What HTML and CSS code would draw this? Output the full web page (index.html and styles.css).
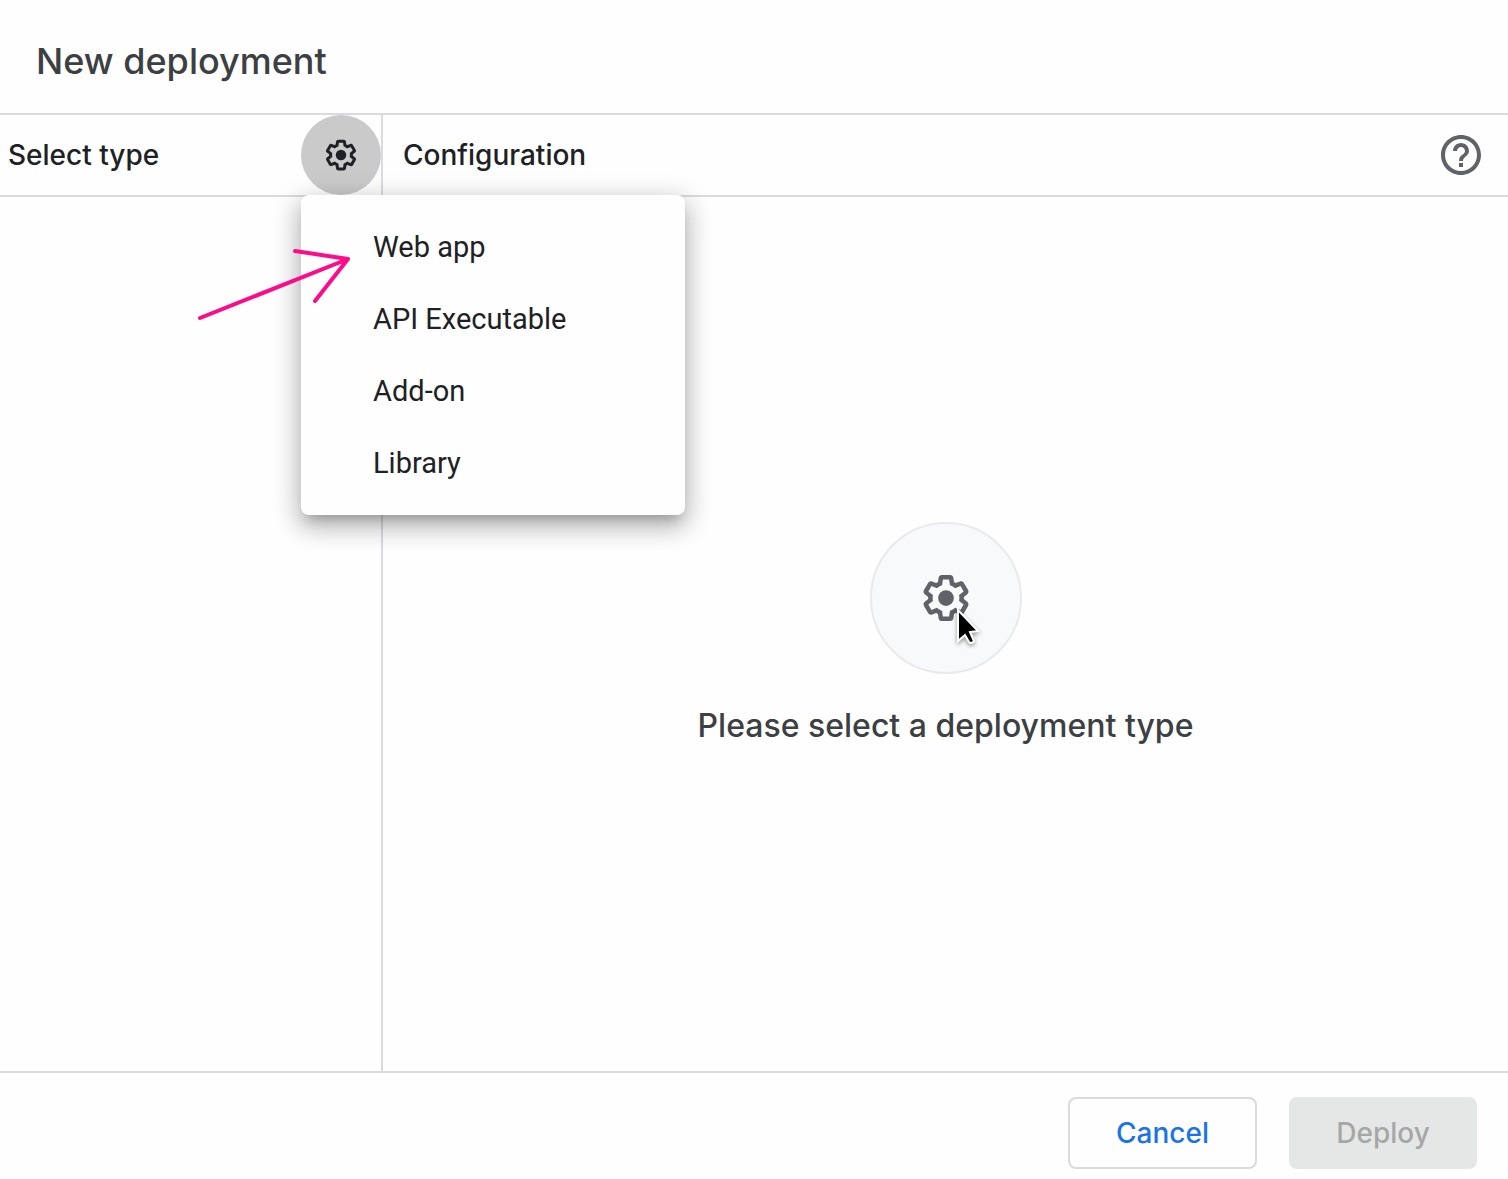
FILE: index.html
```html
<!DOCTYPE html>
<html lang="en">
<head>
  <meta charset="UTF-8">
  <meta name="viewport" content="width=device-width, initial-scale=1.0">
  <title>New deployment</title>
  <link rel="stylesheet" href="styles.css">
</head>
<body>
  <svg class="sprite" aria-hidden="true">
    <symbol id="gear" viewBox="0 0 24 24">
      <path d="M13.85 22.25h-3.7c-.74 0-1.36-.54-1.45-1.27l-.27-1.89c-.27-.14-.53-.29-.79-.46l-1.8.72c-.7.26-1.47-.03-1.81-.65L2.2 15.53c-.35-.66-.2-1.44.36-1.88l1.53-1.19c-.01-.15-.02-.3-.02-.46 0-.15.01-.31.02-.46l-1.52-1.19c-.59-.45-.74-1.26-.37-1.88l1.85-3.19c.34-.62 1.11-.9 1.79-.63l1.81.73c.26-.17.52-.32.78-.46l.27-1.91c.09-.7.71-1.25 1.44-1.25h3.7c.74 0 1.36.54 1.45 1.27l.27 1.89c.27.14.53.29.79.46l1.8-.72c.71-.26 1.48.03 1.82.65l1.84 3.18c.36.66.2 1.44-.36 1.88l-1.52 1.19c.01.15.02.3.02.46s-.01.31-.02.46l1.52 1.19c.56.45.72 1.23.37 1.86l-1.86 3.22c-.34.62-1.11.9-1.8.63l-1.8-.72c-.26.17-.52.32-.78.46l-.27 1.91c-.1.68-.72 1.22-1.46 1.22zm-3.23-2h2.76l.37-2.55.53-.22c.44-.18.88-.44 1.34-.78l.45-.34 2.38.96 1.38-2.4-2.03-1.58.07-.56c.03-.26.06-.51.06-.78s-.03-.53-.06-.78l-.07-.56 2.03-1.58-1.39-2.4-2.39.96-.45-.35c-.42-.32-.87-.58-1.33-.77l-.52-.22-.37-2.55h-2.76l-.37 2.55-.53.21c-.44.19-.88.44-1.34.79l-.45.33-2.38-.95-1.39 2.39 2.03 1.58-.07.56a7 7 0 0 0-.06.79c0 .26.02.53.06.78l.07.56-2.03 1.58 1.38 2.4 2.39-.96.45.35c.43.33.86.58 1.33.77l.53.22.38 2.55z"/>
      <circle cx="12" cy="12" r="3.5"/>
    </symbol>
  </svg>

  <div class="dialog">
    <header class="dialog-header">
      <h1>New deployment</h1>
    </header>

    <main class="panes">
      <section class="types">
        <div class="pane-header">
          <h2>Select type</h2>
          <div class="type-picker">
            <button class="gear-button" type="button" aria-label="Enable deployment types" aria-haspopup="menu" aria-expanded="true">
              <svg class="icon-small"><use href="#gear"/></svg>
            </button>
            <div class="menu" role="menu">
              <button type="button" role="menuitem">Web app</button>
              <button type="button" role="menuitem">API Executable</button>
              <button type="button" role="menuitem">Add-on</button>
              <button type="button" role="menuitem">Library</button>
              <!-- Arrow pointing at the first menu item -->
              <svg class="arrow" viewBox="0 0 160 80" aria-hidden="true">
                <path d="M5 73 153 14M100 6l53 8-33 42"/>
              </svg>
            </div>
          </div>
        </div>
      </section>

      <section class="config">
        <div class="pane-header">
          <h2>Configuration</h2>
          <button class="help-button" type="button" aria-label="Help">
            <svg viewBox="0 0 24 24">
              <path d="M11 18h2v-2h-2v2zm1-16C6.48 2 2 6.48 2 12s4.48 10 10 10 10-4.48 10-10S17.52 2 12 2zm0 18c-4.41 0-8-3.59-8-8s3.59-8 8-8 8 3.59 8 8-3.59 8-8 8zm0-14c-2.21 0-4 1.79-4 4h2c0-1.1.9-2 2-2s2 .9 2 2c0 2-3 1.75-3 5h2c0-2.25 3-2.5 3-5 0-2.21-1.79-4-4-4z"/>
            </svg>
          </button>
        </div>
        <div class="empty">
          <div class="empty-icon">
            <svg class="icon-large"><use href="#gear"/></svg>
            <svg class="cursor" viewBox="0 0 30 44" aria-hidden="true">
              <path d="M3 4v31l7-6 4 7q2 2 4 0l1-1-4-9 8-1z"/>
            </svg>
          </div>
          <p>Please select a deployment type</p>
        </div>
      </section>
    </main>

    <footer class="actions">
      <button class="btn btn-cancel" type="button">Cancel</button>
      <button class="btn btn-deploy" type="button" disabled>Deploy</button>
    </footer>
  </div>
</body>
</html>
```

FILE: styles.css
```css
* {
  box-sizing: border-box;
}
body {
  margin: 0;
  font-family: Inter, "Open Sans", sans-serif;
  font-weight: 500;
  color: #202124;
  background-color: #fefefe;
}
button {
  font-family: inherit;
  color: inherit;
  margin: 0;
  padding: 0;
  border: 0;
  background: none;
}
h1, h2, p {
  margin: 0;
  font-weight: 500;
}
svg {
  display: block;
  fill: currentColor;
}
.sprite {
  position: absolute;
  width: 0;
  height: 0;
}
.dialog {
  display: flex;
  flex-direction: column;
  min-height: 100vh;
}
.dialog-header {
  padding: 37px 36px 28px;
  border-bottom: 2px solid #dadae0;
}
.dialog-header h1 {
  font-size: 36px;
  line-height: 48px;
  color: #3c4043;
}
.panes {
  flex: 1;
  display: flex;
}
.types {
  width: 383px;
  border-right: 2px solid #dadae0;
}
.config {
  flex: 1;
  display: flex;
  flex-direction: column;
}
.pane-header {
  display: flex;
  align-items: center;
  justify-content: space-between;
  height: 82px;
  border-bottom: 2px solid #dadae0;
}
.pane-header h2 {
  font-size: 28px;
  line-height: 36px;
}
.types .pane-header {
  padding-left: 8px;
}
.config .pane-header {
  padding: 0 23px 0 20px;
}
.type-picker {
  position: relative;
}
.gear-button {
  display: flex;
  align-items: center;
  justify-content: center;
  width: 80px;
  height: 80px;
  border-radius: 50%;
  background-color: #cacaca;
}
.icon-small {
  width: 36px;
  height: 36px;
}
.help-button {
  color: #5f6368;
}
.help-button svg {
  width: 48px;
  height: 48px;
}

/* Drop-down with the deployment types */
.menu {
  position: absolute;
  top: 100%;
  left: 0;
  z-index: 1;
  width: 384px;
  padding: 16px 0;
  border-radius: 8px;
  background-color: #fefefe;
  box-shadow: 0 10px 12px -6px rgba(0,0,0,0.2), 0 12px 24px 2px rgba(0,0,0,0.16), 0 6px 28px 4px rgba(0,0,0,0.14);
}
.menu button {
  display: block;
  width: 100%;
  padding: 0 72px;
  font-family: Roboto, sans-serif;
  font-size: 29px;
  font-weight: 400;
  line-height: 72px;
  text-align: left;
}
.arrow {
  position: absolute;
  top: 50px;
  left: -106px;
  width: 160px;
  height: 80px;
  fill: none;
  stroke: #ff0a8a;
  stroke-width: 4;
  stroke-linecap: round;
  stroke-linejoin: round;
}

.empty {
  flex: 1;
  display: flex;
  flex-direction: column;
  align-items: center;
  justify-content: center;
  gap: 32px;
  color: #3c4043;
}
.empty p {
  font-size: 32px;
  line-height: 40px;
}
.empty-icon {
  position: relative;
  display: flex;
  align-items: center;
  justify-content: center;
  width: 152px;
  height: 152px;
  border: 2px solid #e8eaed;
  border-radius: 50%;
  background-color: #f8f9fa;
  color: #5f6368;
}
.icon-large {
  width: 54px;
  height: 54px;
}
.cursor {
  position: absolute;
  top: 82px;
  left: 83px;
  width: 30px;
  height: 44px;
  fill: #000;
  stroke: #fff;
  stroke-width: 2;
  filter: drop-shadow(0 2px 2px rgba(0,0,0,0.4));
}

.actions {
  display: flex;
  justify-content: flex-end;
  gap: 32px;
  padding: 24px 31px 10px;
  border-top: 2px solid #dadae0;
}
.btn {
  min-width: 188px;
  height: 72px;
  padding: 0 46px;
  border-radius: 8px;
  font-size: 28px;
  font-weight: 500;
}
.btn-cancel {
  border: 2px solid #dadae0;
  color: #1a73e8;
}
.btn-deploy {
  background-color: #e5e7e6;
  color: #a5a7a7;
}
```
